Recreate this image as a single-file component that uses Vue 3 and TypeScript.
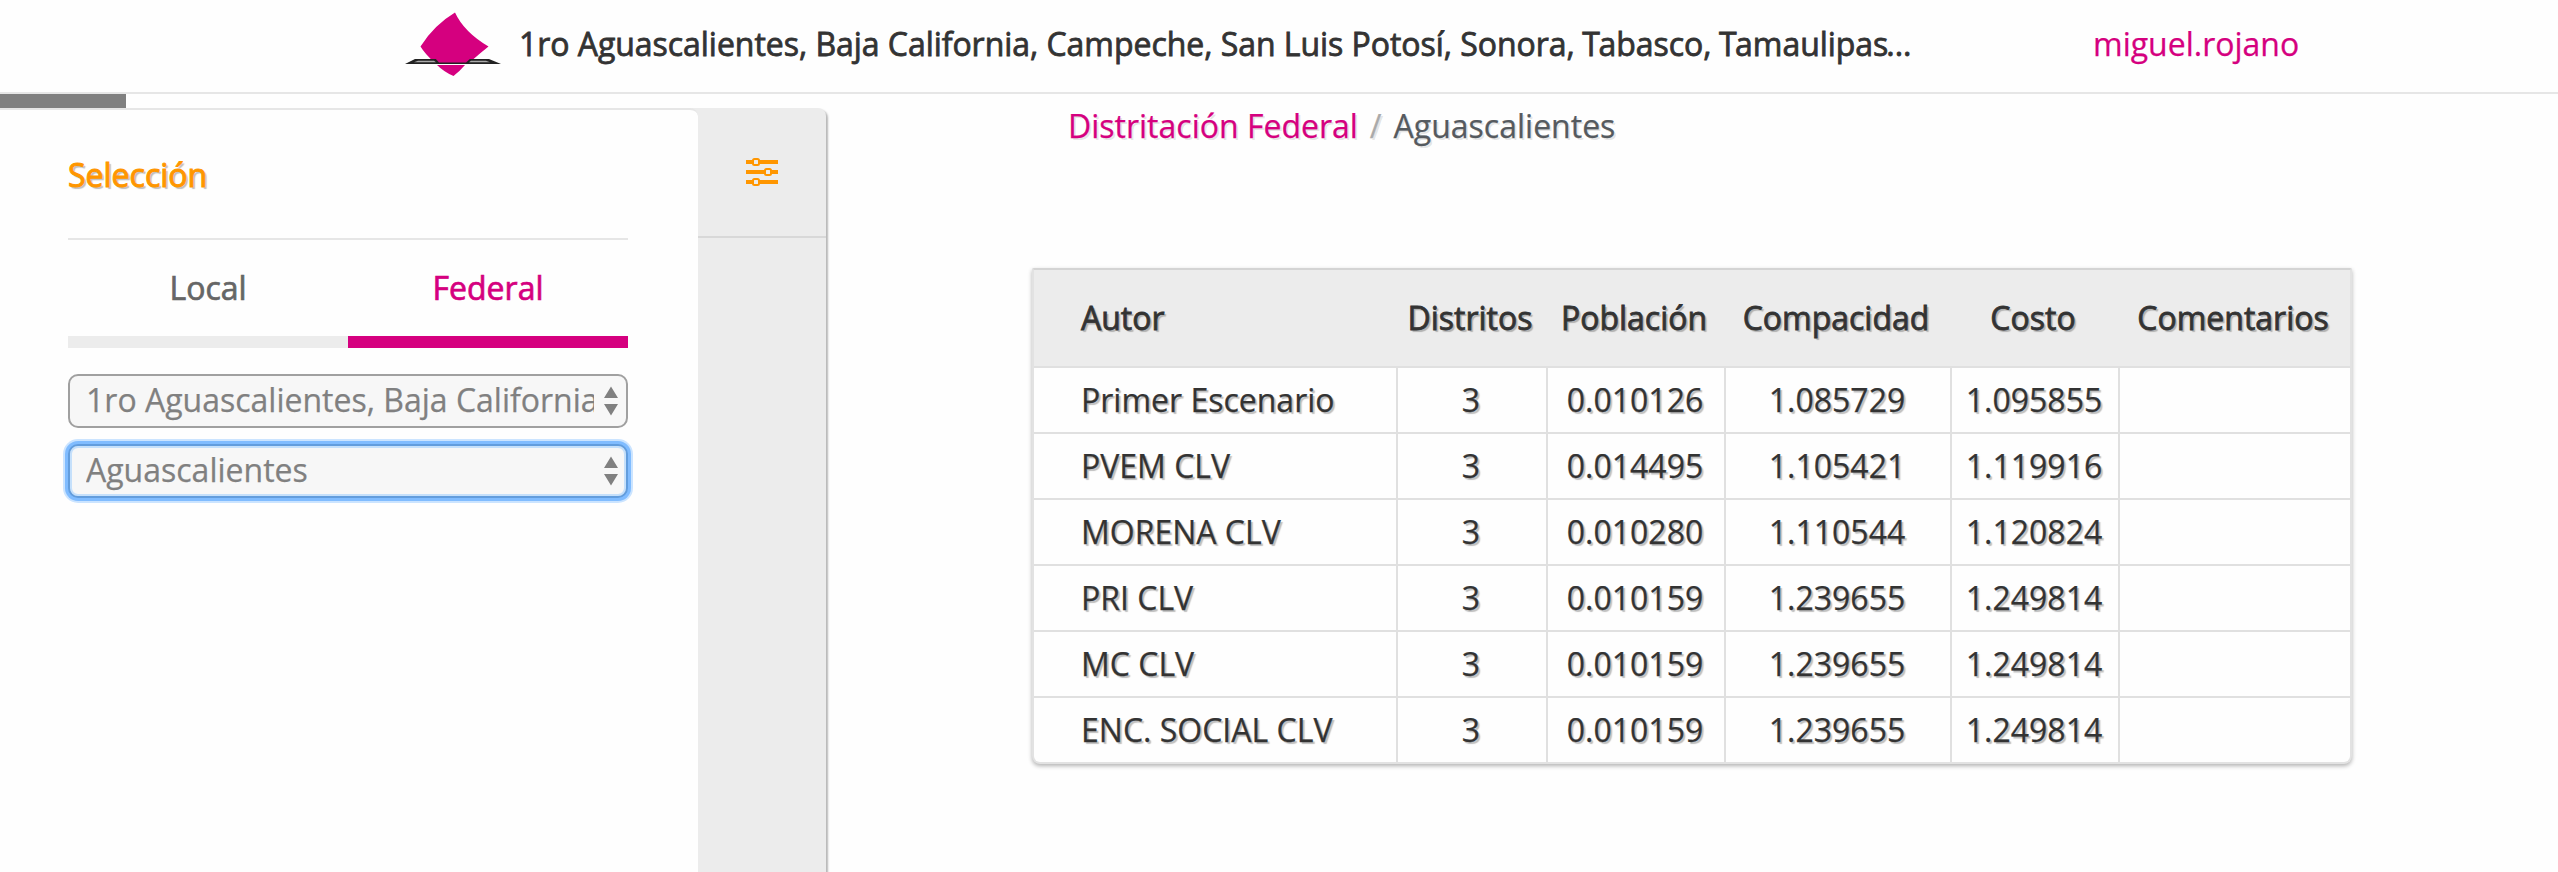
<script setup lang="ts">
import { ref } from 'vue'

interface Scenario {
  author: string
  districts: number
  population: string
  compactness: string
  cost: string
  comments: string
}

const columns = ['Autor', 'Distritos', 'Población', 'Compacidad', 'Costo', 'Comentarios']

const activeTab = ref('Federal')
const tabs = ['Local', 'Federal']

const scenarios: Scenario[] = [
  { author: 'Primer Escenario', districts: 3, population: '0.010126', compactness: '1.085729', cost: '1.095855', comments: '' },
  { author: 'PVEM CLV', districts: 3, population: '0.014495', compactness: '1.105421', cost: '1.119916', comments: '' },
  { author: 'MORENA CLV', districts: 3, population: '0.010280', compactness: '1.110544', cost: '1.120824', comments: '' },
  { author: 'PRI CLV', districts: 3, population: '0.010159', compactness: '1.239655', cost: '1.249814', comments: '' },
  { author: 'MC CLV', districts: 3, population: '0.010159', compactness: '1.239655', cost: '1.249814', comments: '' },
  { author: 'ENC. SOCIAL CLV', districts: 3, population: '0.010159', compactness: '1.239655', cost: '1.249814', comments: '' },
]

const selects = [
  { label: '1ro Aguascalientes, Baja California', focused: false },
  { label: 'Aguascalientes', focused: true },
]
</script>

<template>
  <div class="page">
    <header class="topbar">
      <svg class="logo" width="96" height="66" viewBox="0 0 96 66" aria-hidden="true">
        <path d="M50 0.5Q59 20 83.5 34.5Q74 42 64 51H30Q20 42 15.500 34.500Q29 13 50 0.500Z" fill="#d5007f" />
        <path d="M0 52L10 47H84L96 52Z" fill="#222" />
        <path d="M9 50.200L13 48.700H29L31 50.200ZM64 50.200L66 48.700H81L85 50.200Z" fill="#aaa" />
        <path d="M30 46L34 50.400H61L66 46Z" fill="#d5007f" />
        <path d="M32 53H60Q54 60 48.500 64Q39 60 32 53Z" fill="#d5007f" />
      </svg>
      <h1 class="title">1ro Aguascalientes, Baja California, Campeche, San Luis Potosí, Sonora, <span class="cap">T</span>abasco, <span class="cap">T</span>amaulipas<span class="dots">...</span></h1>
      <a class="user">miguel.rojano</a>
    </header>

    <div class="body">
      <div class="left">
        <div class="progress"><div class="progress-bar"></div></div>
        <aside class="panel">
          <section class="selection">
            <h2 class="heading">Selección</h2>
            <nav class="tabs">
              <button
                v-for="tab in tabs"
                :key="tab"
                type="button"
                class="tab"
                :class="{ active: tab === activeTab }"
                @click="activeTab = tab"
              >{{ tab }}</button>
            </nav>
            <div v-for="item in selects" :key="item.label" class="select" :class="{ focused: item.focused }">
              <span class="select-label">{{ item.label }}</span>
              <svg class="arrows" width="14" height="30" viewBox="0 0 14 30" aria-hidden="true">
                <path d="M7 0.500L14 12H0ZM0 18H14L7 29.500Z" fill="#808080" />
              </svg>
            </div>
          </section>
          <div class="rail">
            <div class="rail-item">
              <svg width="32" height="28" viewBox="0 0 32 28" aria-hidden="true">
                <path d="M0 4H32M0 14H32M0 24H32" stroke="#ff9600" stroke-width="4" />
                <g fill="#ececec" stroke="#ff9600" stroke-width="2">
                  <rect x="7" y="1" width="6" height="6" rx="1.500" />
                  <rect x="19" y="11" width="6" height="6" rx="1.500" />
                  <rect x="7" y="21" width="6" height="6" rx="1.500" />
                </g>
              </svg>
            </div>
          </div>
        </aside>
      </div>

      <main class="content">
        <div class="breadcrumb">
          <a class="crumb-link">Distritación Federal</a>
          <span class="slash">/</span>
          <span>Aguascalientes</span>
        </div>
        <div class="card">
          <table>
            <colgroup>
              <col class="c-author" /><col class="c-districts" /><col class="c-population" />
              <col class="c-compactness" /><col class="c-cost" /><col class="c-comments" />
            </colgroup>
            <thead>
              <tr><th v-for="c in columns" :key="c">{{ c }}</th></tr>
            </thead>
            <tbody>
              <tr v-for="s in scenarios" :key="s.author">
                <td>{{ s.author }}</td>
                <td>{{ s.districts }}</td>
                <td>{{ s.population }}</td>
                <td>{{ s.compactness }}</td>
                <td>{{ s.cost }}</td>
                <td>{{ s.comments }}</td>
              </tr>
            </tbody>
          </table>
        </div>
      </main>
    </div>
  </div>
</template>

<style>
body {
  margin: 0;
  overflow: hidden;
}
</style>

<style scoped>
.page {
  height: 872px;
  display: flex;
  flex-direction: column;
  overflow: hidden;
  box-sizing: border-box;
  background: #fefefe;
  color: #333;
  font: 400 32px/44px "Open Sans", sans-serif;
  -webkit-text-stroke: 0.25px currentColor;
}
.topbar {
  flex: none;
  height: 92px;
  padding-left: 405px;
  display: flex;
  align-items: center;
  border-bottom: 2px solid #e6e6e6;
  white-space: nowrap;
}
.logo {
  flex: none;
  margin-right: 18px;
  margin-bottom: 2px;
}
.title {
  flex: none;
  width: 1574px;
  margin: 0 0 4px;
  font: inherit;
  letter-spacing: -0.045px;
  -webkit-text-stroke: 0.8px currentColor;
}
.cap {
  margin-left: -0.7px;
  letter-spacing: -1.5px;
}
.dots {
  margin-left: -2px;
  letter-spacing: 0;
}
.user {
  margin-bottom: 4px;
  color: #d5007f;
}
.body {
  flex: 1;
  min-height: 0;
  display: flex;
}
.left {
  flex: none;
  width: 826px;
  display: flex;
  flex-direction: column;
}
.progress {
  flex: none;
  height: 14px;
}
.progress-bar {
  width: 126px;
  height: 14px;
  background: #808080;
}
.panel {
  flex: 1;
  display: flex;
  background: #ececec;
  border-radius: 0 8px 0 0;
  box-shadow: 2px 2px 2px rgba(0, 0, 0, 0.28);
}
.selection {
  box-sizing: border-box;
  width: 698px;
  padding: 0 70px 0 68px;
  border-top: 2px solid #e6e6e6;
  border-radius: 0 8px 0 0;
  background: #fefefe;
}
.heading {
  height: 85px;
  margin: 0;
  padding-top: 43px;
  border-bottom: 2px solid #e6e6e6;
  color: #ff9600;
  font: inherit;
  -webkit-text-stroke: 1px currentColor;
  text-shadow: 2px 2px 1px rgba(0, 0, 0, 0.25);
}
.tabs {
  display: flex;
  margin-bottom: 26px;
}
.tab {
  flex: 1;
  box-sizing: border-box;
  height: 108px;
  padding: 0;
  border: 0;
  border-bottom: 12px solid #ececec;
  background: none;
  color: #666;
  font: inherit;
  -webkit-text-stroke: 0.7px currentColor;
}
.tab.active {
  border-color: #d5007f;
  color: #d5007f;
}
.select {
  box-sizing: border-box;
  height: 54px;
  margin-bottom: 16px;
  padding: 0 8px 3px 16px;
  display: flex;
  align-items: center;
  justify-content: space-between;
  border: 2px solid #a0a0a0;
  border-radius: 10px;
  background: #f7f7f7;
  color: #808080;
}
.select-label {
  width: 508px;
  overflow: hidden;
  white-space: nowrap;
}
.arrows {
  flex: none;
  margin-top: 2px;
}
.select.focused {
  border-color: #629ddd;
  box-shadow: 0 0 0 3px #80bcff, 0 0 0 5px #cbe4ff, inset 0 0 0 2px #c5e0fb;
}
.rail {
  width: 128px;
}
.rail-item {
  box-sizing: border-box;
  height: 130px;
  display: flex;
  align-items: center;
  justify-content: center;
  border-bottom: 2px solid #d8d8d8;
}
.content {
  padding-left: 206px;
}
.breadcrumb {
  height: 142px;
  padding: 10px 0 22px 36px;
  display: flex;
  gap: 12px;
  color: #555a5f;
  text-shadow: 2px 2px 0 rgba(0, 0, 0, 0.1);
  white-space: nowrap;
}
.crumb-link {
  color: #d5007f;
}
.slash {
  color: #aaa;
}
.card {
  width: 1316px;
  border: 2px solid #e2e2e2;
  border-top-color: #d4d4d4;
  border-radius: 2px 2px 8px 8px;
  background: #fefefe;
  box-shadow: 0 2px 4px rgba(0, 0, 0, 0.3);
}
table {
  width: 1316px;
  table-layout: fixed;
  border-spacing: 0;
}
.c-author { width: 362px; }
.c-districts { width: 150px; }
.c-population { width: 178px; }
.c-compactness { width: 226px; }
.c-cost { width: 168px; }
.c-comments { width: 232px; }
th,
td {
  box-sizing: border-box;
  padding: 0 2px 0 0;
  text-align: center;
  white-space: nowrap;
}
th {
  height: 98px;
  border-bottom: 2px solid #e0e0e0;
  background: #ececec;
  font-weight: 400;
  -webkit-text-stroke: 0.8px currentColor;
  text-shadow: 2px 2px 1px rgba(0, 0, 0, 0.25);
}
td {
  height: 66px;
  border-bottom: 2px solid #e0e0e0;
  border-left: 2px solid #e0e0e0;
  text-shadow: 2px 2px 1px rgba(0, 0, 0, 0.25);
}
th:first-child,
td:first-child {
  padding-left: 47px;
  border-left: 0;
  text-align: left;
}
tbody tr:last-child td {
  height: 64px;
  border-bottom: 0;
}
</style>
